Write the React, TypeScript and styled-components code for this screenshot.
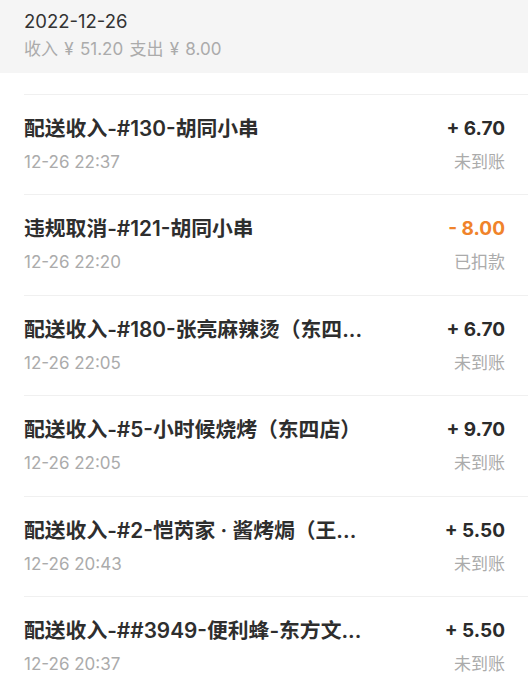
import styled, { createGlobalStyle } from 'styled-components';

const GlobalStyle = createGlobalStyle`
  body {
    margin: 0;
    background: #ffffff;
    font-family: Inter, 'Noto Sans CJK SC', 'Noto Sans', sans-serif;
    -webkit-font-smoothing: antialiased;
  }
`;

const Page = styled.div`
  width: 528px;
  min-height: 689px;
  background: #ffffff;
  overflow: hidden;
`;

const DayHeader = styled.div`
  height: 73px;
  box-sizing: border-box;
  padding: 9px 24px 0;
  background: #f5f5f5;
`;

const DayDate = styled.div`
  font-size: 18.5px;
  line-height: 24px;
  color: #333333;
`;

const DaySummary = styled.div`
  margin-top: 5px;
  font-size: 17px;
  line-height: 22px;
  word-spacing: 1.5px;
  color: #ababab;
  white-space: pre;
`;

const List = styled.div`
  padding-top: 21px;
`;

const Row = styled.div`
  height: 100.4px;
  box-sizing: border-box;
  margin-left: 24px;
  padding: 20px 23px 0 0;
  border-top: 1px solid #f0f0f0;
  display: flex;
  justify-content: space-between;
  gap: 24px;
`;

const Info = styled.div`
  display: flex;
  flex-direction: column;
  min-width: 0;
`;

const Title = styled.div`
  font-size: 20.8px;
  line-height: 28px;
  font-weight: 600;
  color: #2e2e2e;
  white-space: nowrap;
  overflow: hidden;
  text-overflow: ellipsis;
`;

const Time = styled.div`
  margin-top: 8px;
  font-size: 17px;
  line-height: 22px;
  color: #ababab;
`;

const Money = styled.div`
  display: flex;
  flex-direction: column;
  align-items: flex-end;
  flex-shrink: 0;
`;

const Amount = styled.div<{ $out?: boolean }>`
  font-size: 19px;
  line-height: 28px;
  font-weight: 700;
  color: ${p => (p.$out ? '#f0832a' : '#2b2b2b')};
  white-space: pre;
`;

const Status = styled.div`
  margin-top: 8px;
  font-size: 17px;
  line-height: 22px;
  color: #ababab;
`;

interface Record {
  title: string;
  time: string;
  amount: string;
  out?: boolean;
  status: string;
}

const records: Record[] = [
  { title: '配送收入-#130-胡同小串', time: '12-26 22:37', amount: '+ 6.70', status: '未到账' },
  { title: '违规取消-#121-胡同小串', time: '12-26 22:20', amount: '- 8.00', out: true, status: '已扣款' },
  { title: '配送收入-#180-张亮麻辣烫（东四...', time: '12-26 22:05', amount: '+ 6.70', status: '未到账' },
  { title: '配送收入-#5-小时候烧烤（东四店）', time: '12-26 22:05', amount: '+ 9.70', status: '未到账' },
  { title: '配送收入-#2-恺芮家 · 酱烤焗（王...', time: '12-26 20:43', amount: '+ 5.50', status: '未到账' },
  { title: '配送收入-##3949-便利蜂-东方文...', time: '12-26 20:37', amount: '+ 5.50', status: '未到账' },
];

export default function App() {
  return (
    <Page>
      <GlobalStyle />
      <DayHeader>
        <DayDate>2022-12-26</DayDate>
        <DaySummary>收入 ¥ 51.20 支出 ¥ 8.00</DaySummary>
      </DayHeader>
      <List>
        {records.map((r, i) => (
          <Row key={i}>
            <Info>
              <Title>{r.title}</Title>
              <Time>{r.time}</Time>
            </Info>
            <Money>
              <Amount $out={r.out}>{r.amount}</Amount>
              <Status>{r.status}</Status>
            </Money>
          </Row>
        ))}
      </List>
    </Page>
  );
}
